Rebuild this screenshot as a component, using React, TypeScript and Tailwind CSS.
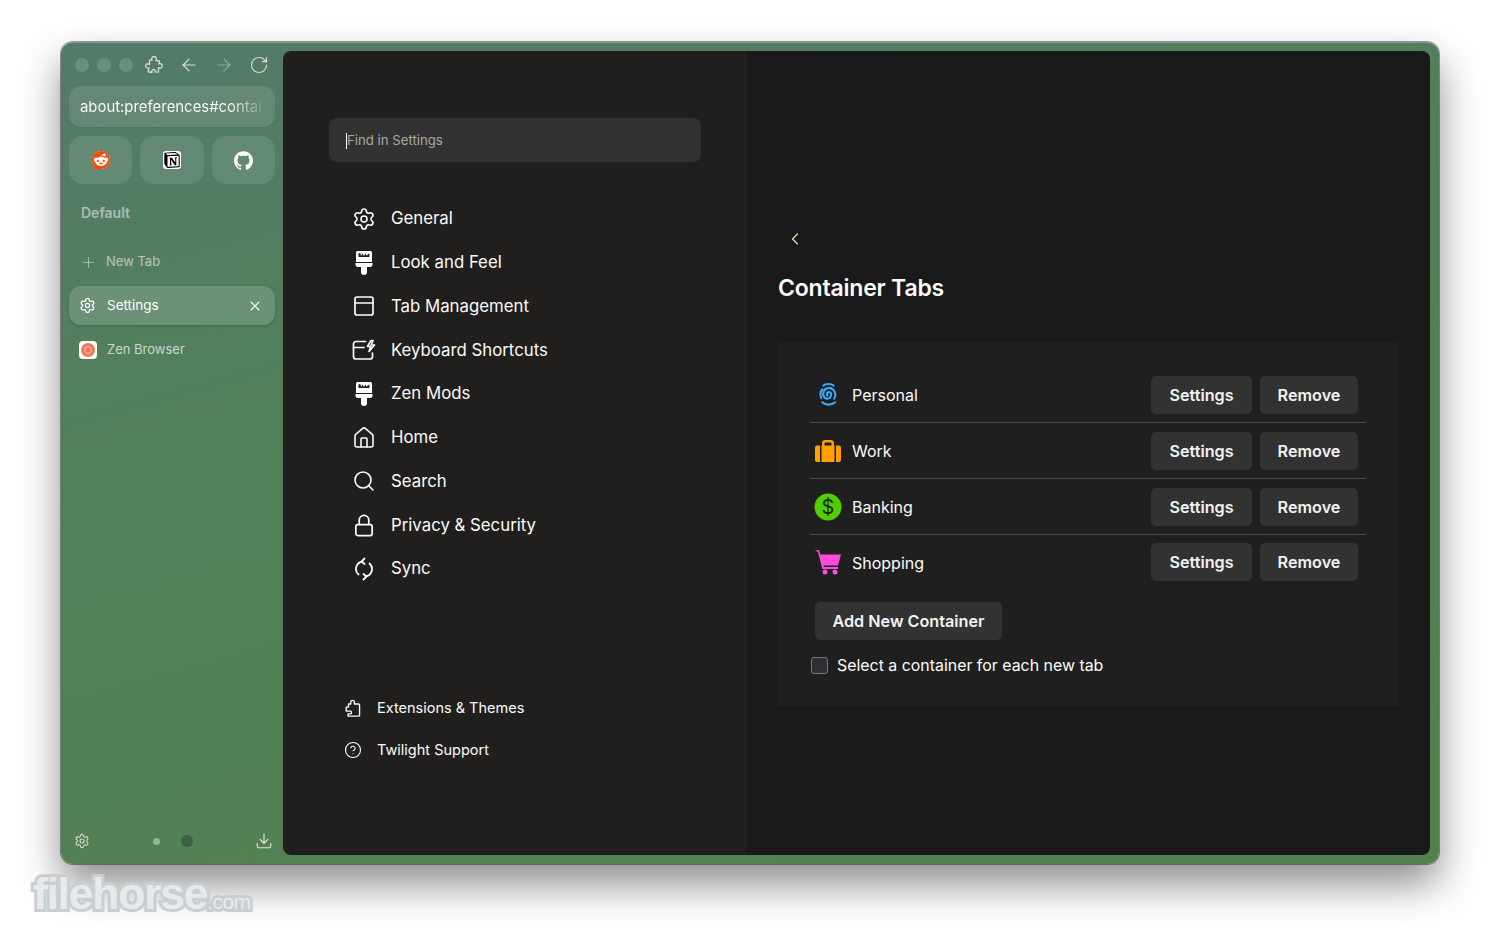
import { ArrowLeft, ArrowRight, ChevronLeft, CircleHelp, Download, House, PanelTop, Plus, RotateCw, Search, Settings, X } from 'lucide-react';
import { SiGithub, SiNotion, SiReddit } from 'react-icons/si';
import type { ReactNode } from 'react';

function PuzzleIcon({ className }: { className?: string }) {
  return (
    <svg className={className} viewBox="0 0 20 20" fill="none" stroke="currentColor" strokeWidth={1.3} strokeLinejoin="round">
      <path d="M8 5C7 2.500 8.500 1.500 10 1.500 12 1.500 13 3.500 12 5.500L15.500 6 15 9C17 8 18.700 9.500 18.200 11.500 17.700 13.200 16 13.500 14.500 12.500L14.500 16.500C14.500 17 14 17.300 13.500 17.200L11 16.800C11.500 15 10 14 9 14.500 8 15 7.500 16 8 17.500L5 17C4.500 17 4.200 16.500 4.300 16L5 13C3 13.500 1.300 12 1.800 10.300 2.300 8.800 4 8.500 5.500 9.500L5.500 5.500C5.500 5 6 4.700 6.500 4.800z" />
    </svg>
  );
}

function BrushIcon({ className }: { className?: string }) {
  return (
    <svg className={className} viewBox="0 0 20 25" fill="currentColor">
      <path d="M3.500 1h13c.8 0 1.500.7 1.500 1.500V12H2V2.500C2 1.700 2.700 1 3.500 1z" />
      <path d="M1.500 13h17v1.800c0 1.200-.9 2.200-2.200 2.200H13v5a3 3 0 0 1-6 0v-5H3.700c-1.300 0-2.200-1-2.200-2.200z" />
      <path d="M4.500 3.200h2l.5 2.800 1.500-2.500 1.300 2.500 1.700-2.500.9 2.300 3-2.600v3.800H4.500z" fill="#201f1e" />
    </svg>
  );
}

function KeyboardIcon({ className }: { className?: string }) {
  return (
    <svg className={className} viewBox="0 0 24 22" fill="none" stroke="currentColor" strokeWidth={1.7} strokeLinejoin="round" strokeLinecap="round">
      <path d="M13.500 2.500H4A2.500 2.500 0 0 0 1.500 5v12.500A2.500 2.500 0 0 0 4 20h14a2.500 2.500 0 0 0 2.500-2.500V14" />
      <path d="M1.500 8.500h10.500" />
      <path d="M19 1.500l-3.500 6h3.300L17 12.500l5.500-6.500h-3.300L21 1.500z" />
    </svg>
  );
}

function LockIcon({ className }: { className?: string }) {
  return (
    <svg className={className} viewBox="0 0 20 24" fill="none" stroke="currentColor" strokeWidth={1.8} strokeLinejoin="round">
      <rect x="1.500" y="11" width="17" height="11.500" rx="2" />
      <path d="M5 11V6.500a5 5 0 0 1 10 0V11" />
    </svg>
  );
}

function SyncIcon({ className }: { className?: string }) {
  return (
    <svg className={className} viewBox="0 0 20 24" fill="none" stroke="currentColor" strokeWidth={1.800} strokeLinecap="round" strokeLinejoin="round">
      <path d="M15.500 6.500A7.500 7.500 0 0 1 11.500 19.500" />
      <path d="M4.500 17.500A7.500 7.500 0 0 1 8.500 4.500" />
      <path d="M10.500 1.500L7.500 4.500 10.500 7M9.500 17l3 2.500-3 3" />
    </svg>
  );
}

function ExtensionIcon({ className }: { className?: string }) {
  return (
    <svg className={className} viewBox="0 0 20 20" fill="none" stroke="currentColor" strokeWidth={1.500} strokeLinejoin="round">
      <path d="M5 9V5.500h2.500V3c0-2 4-2 4 0v2.500H16c.8 0 1.300.5 1.300 1.300V18c0 .6-.5 1-1 1H4.500v-2.500h2.700c1.500 0 1.500-3 0-3H2.500V9z" />
    </svg>
  );
}

function FingerprintIcon() {
  return (
    <svg className="h-[25px] w-[25px]" viewBox="0 0 24 24" fill="none" stroke="#37adf5" strokeWidth={2} strokeLinecap="round">
      <path d="M7 3.500C9.500 1.300 14.500 1.300 17 3.500" />
      <path d="M11 13A2 2 0 1 1 14.500 11.500 3.800 3.800 0 0 1 10 16 5 5 0 0 1 7 10.500 5.500 5.500 0 0 1 16.500 7.500 7.300 7.300 0 0 1 17.500 16" />
      <path d="M5 15.500C4 12.500 4.300 9 6 7" />
      <path d="M6 19.500C9 22.500 15 22.500 18.500 19.500" />
    </svg>
  );
}

function BriefcaseIcon() {
  return (
    <svg className="h-[24px] w-[28px]" viewBox="0 0 28 24" fill="#ff9f00">
      <path d="M8 7V4c0-1.700 1.300-3 3-3h6c1.700 0 3 1.300 3 3v3h-2.500V4.500c0-.5-.4-1-1-1h-5c-.6 0-1 .5-1 1V7z" />
      <rect x="7.500" y="6.500" width="13" height="16.500" />
      <path d="M1 8.500C1 7.400 1.900 6.500 3 6.500h3V23H3c-1.100 0-2-.9-2-2z" />
      <path d="M27 8.500c0-1.100-.9-2-2-2h-3V23h3c1.100 0 2-.9 2-2z" />
    </svg>
  );
}

function DollarIcon() {
  return (
    <svg className="h-[28px] w-[28px]" viewBox="0 0 28 28">
      <circle cx="14" cy="14" r="13.500" fill="#51cd00" />
      <text x="14" y="21" textAnchor="middle" fontSize="20" fill="#12240a" fontFamily="Inter, sans-serif">$</text>
    </svg>
  );
}

function CartIcon() {
  return (
    <svg className="h-[26px] w-[28px]" viewBox="0 0 28 26" fill="#ff4bda">
      <path d="M1 1.500l4-.5 1.300 4.500H27l-3 11H9.500l.4 1.500H24v2H8.300L4 3z" />
      <circle cx="11" cy="23" r="2.500" />
      <circle cx="21" cy="23" r="2.500" />
    </svg>
  );
}

const navItems: { label: string; icon: ReactNode }[] = [
  { label: 'General', icon: <Settings className="h-[24px] w-[24px]" strokeWidth={1.600} /> },
  { label: 'Look and Feel', icon: <BrushIcon className="h-[25px] w-[20px]" /> },
  { label: 'Tab Management', icon: <PanelTop className="h-[24px] w-[24px]" strokeWidth={1.700} /> },
  { label: 'Keyboard Shortcuts', icon: <KeyboardIcon className="h-[22px] w-[24px]" /> },
  { label: 'Zen Mods', icon: <BrushIcon className="h-[25px] w-[20px]" /> },
  { label: 'Home', icon: <House className="h-[24px] w-[24px]" strokeWidth={1.600} /> },
  { label: 'Search', icon: <Search className="h-[24px] w-[24px]" strokeWidth={1.600} /> },
  { label: 'Privacy & Security', icon: <LockIcon className="h-[23px] w-[20px]" /> },
  { label: 'Sync', icon: <SyncIcon className="h-[24px] w-[20px]" /> },
];

const containers: { label: string; icon: ReactNode; row: string }[] = [
  { label: 'Personal', icon: <FingerprintIcon />, row: 'h-[56px] border-b border-[#4a4a4a]' },
  { label: 'Work', icon: <BriefcaseIcon />, row: 'h-[56px] border-b border-[#4a4a4a]' },
  { label: 'Banking', icon: <DollarIcon />, row: 'h-[56px] border-b border-[#4a4a4a]' },
  { label: 'Shopping', icon: <CartIcon />, row: 'h-[54px]' },
];

function Btn({ children, className }: { children: ReactNode; className: string }) {
  return (
    <button className={`flex h-[38px] items-center justify-center rounded-[5px] bg-[#323232] pt-[1px] text-[16.200px] font-semibold text-[#f2f2f2] ${className}`}>
      {children}
    </button>
  );
}

function Sidebar() {
  return (
    <aside className="flex w-[222px] shrink-0 flex-col pb-[4px] pl-[8px] pr-[8px] pt-[7px] text-white">
      {/* window controls */}
      <div className="flex h-[30px] items-center pl-[6px]">
        <span className="h-[14px] w-[14px] rounded-full bg-white/15" />
        <span className="ml-[8px] h-[14px] w-[14px] rounded-full bg-white/15" />
        <span className="ml-[8px] h-[14px] w-[14px] rounded-full bg-white/15" />
        <PuzzleIcon className="ml-[11px] h-[20px] w-[20px] text-white/75" />
        <ArrowLeft className="ml-[15px] h-[20px] w-[20px] text-white/75" strokeWidth={1.400} />
        <ArrowRight className="ml-[15px] h-[20px] w-[20px] text-white/35" strokeWidth={1.400} />
        <RotateCw className="ml-[15px] h-[20px] w-[20px] text-white/75" strokeWidth={1.400} />
      </div>
      <div className="mt-[6px] flex h-[41px] items-center rounded-[12px] bg-white/10 pl-[11px] pt-[1px] shadow-[0_1px_2px_rgba(0,0,0,0.05)]">
        <span className="whitespace-nowrap bg-[linear-gradient(90deg,#fff_82%,rgba(255,255,255,0.15))] bg-clip-text text-[14.900px] text-transparent">about:preferences#contai</span>
      </div>
      <div className="mt-[9px] grid grid-cols-3 gap-[8px]">
        <div className="flex h-[48px] items-center justify-center rounded-[14px] bg-white/10">
          <span className="flex h-[18px] w-[18px] items-center justify-center rounded-full bg-white">
            <SiReddit className="h-[18px] w-[18px] text-[#ff4500]" />
          </span>
        </div>
        <div className="flex h-[48px] items-center justify-center rounded-[14px] bg-white/10">
          <span className="flex h-[18px] w-[18px] items-center justify-center rounded-[3px] bg-white">
            <SiNotion className="h-[16px] w-[16px] text-black" />
          </span>
        </div>
        <div className="flex h-[48px] items-center justify-center rounded-[14px] bg-white/10">
          <SiGithub className="h-[19px] w-[19px] text-white" />
        </div>
      </div>
      <div className="mt-[18px] pl-[12px] text-[14px] font-semibold text-white/50">Default</div>
      <div className="mt-[19px] flex h-[40px] items-center pl-[11px] text-[13px] text-white/55">
        <Plus className="h-[17px] w-[17px]" strokeWidth={1.200} />
        <span className="ml-[9px]">New Tab</span>
      </div>
      <div className="mt-[4px] flex h-[39px] items-center rounded-[12px] bg-white/15 pl-[10px] pr-[12px] text-[13.500px] text-white shadow-[0_1px_3px_rgba(0,0,0,0.2)]">
        <Settings className="h-[17px] w-[17px]" strokeWidth={1.800} />
        <span className="ml-[11px] flex-1">Settings</span>
        <X className="h-[16px] w-[16px]" strokeWidth={1.600} />
      </div>
      <div className="mt-[5px] flex h-[40px] items-center pl-[10px] text-[13px] text-white/70">
        <span className="flex h-[18px] w-[18px] items-center justify-center rounded-[4px] bg-white">
          <span className="flex h-[14px] w-[14px] items-center justify-center rounded-full bg-[#f0785a]">
            <span className="h-[8px] w-[8px] rounded-full border border-[#f9c4b4]" />
          </span>
        </span>
        <span className="ml-[10px]">Zen Browser</span>
      </div>
      <div className="mt-auto flex h-[20px] items-center pl-[5px] pr-[2px]">
        <Settings className="h-[16px] w-[16px] text-white/75" strokeWidth={1.600} />
        <div className="ml-[63px] h-[7px] w-[7px] rounded-full bg-white/40" />
        <div className="ml-[21px] h-[12px] w-[12px] rounded-full bg-[#3f5f45]" />
        <Download className="ml-auto h-[18px] w-[18px] text-white/80" strokeWidth={1.500} />
      </div>
    </aside>
  );
}

function SettingsNav() {
  return (
    <nav className="flex w-[464px] shrink-0 flex-col bg-[#201f1e] pb-[89px] pl-[46px] pr-[46px] pt-[67px]">
      <div className="flex h-[44px] items-center rounded-[8px] bg-[#333232] pl-[17px] pt-[1px] text-[13.200px] text-[#a8a8a8]">
        <span className="h-[16px] w-px bg-white" />
        Find in Settings
      </div>
      <ul className="mt-[35px] flex flex-col">
        {navItems.map((item) => (
          <li key={item.label} className="flex h-[43.750px] items-center text-[16.800px] text-[#fbfbfb]">
            <span className="ml-[22px] flex w-[26px] shrink-0 justify-center">{item.icon}</span>
            <span className="ml-[14px]">{item.label}</span>
          </li>
        ))}
      </ul>
      <ul className="mt-auto flex flex-col gap-[10px] text-[14.500px] text-[#fbfbfb]">
        <li className="flex h-[32px] items-center pl-[15px]">
          <ExtensionIcon className="h-[18px] w-[18px]" />
          <span className="ml-[15px]">Extensions &amp; Themes</span>
        </li>
        <li className="flex h-[32px] items-center pl-[15px]">
          <CircleHelp className="h-[18px] w-[18px]" strokeWidth={1.500} />
          <span className="ml-[15px]">Twilight Support</span>
        </li>
      </ul>
    </nav>
  );
}

function ContainerPanel() {
  return (
    <section className="flex min-w-0 flex-1 flex-col bg-[#191919] pl-[31px] pr-[31px] pt-[178px] text-[#fbfbfb]">
      <ChevronLeft className="ml-[7px] h-[20px] w-[20px] text-[#f1d9b5]" strokeWidth={1.500} />
      <h1 className="mt-[24px] text-[23px] font-semibold leading-[30px] tracking-[-0.2px]">Container Tabs</h1>
      <div className="mt-[40px] flex h-[363px] flex-col bg-[#1f1f1f] pl-[32px] pr-[33px] pt-[24px]">
        {containers.map((c) => (
          <div key={c.label} className={`flex items-center text-[16px] ${c.row}`}>
            <span className="flex w-[36px] justify-center">{c.icon}</span>
            <span className="ml-[6px] flex-1 pt-[1px]">{c.label}</span>
            <Btn className="w-[101px]">Settings</Btn>
            <Btn className="ml-[8px] mr-[8px] w-[98px]">Remove</Btn>
          </div>
        ))}
        <Btn className="ml-[5px] mt-[13px] w-[187px]">Add New Container</Btn>
        <label className="ml-[1px] mt-[14px] flex items-center text-[15.900px]">
          <span className="h-[17px] w-[17px] rounded-[3px] border border-[#777] bg-[#2f2f33]" />
          <span className="ml-[9px]">Select a container for each new tab</span>
        </label>
      </div>
    </section>
  );
}

export default function App() {
  return (
    <div className="relative h-[945px] w-[1500px] overflow-hidden bg-white pl-[61px] pr-[61px] pt-[42px] font-['Inter',sans-serif]">
      <div className="flex h-[822px] overflow-hidden rounded-[12px] border-t border-t-[#7f9a88] bg-[linear-gradient(165deg,#547a6a_0%,#52805a_35%,#52814f_100%)] pb-[9px] pr-[9px] shadow-[0_20px_40px_rgba(0,0,0,0.45),0_0_0_1px_rgba(60,60,60,0.5)]">
        <Sidebar />
        <main className="mt-[8px] flex min-w-0 flex-1 overflow-hidden rounded-[8px]">
          <SettingsNav />
          <ContainerPanel />
        </main>
      </div>
      {/* filehorse watermark */}
      <div className="absolute left-[33px] top-[866px] flex items-baseline whitespace-nowrap font-['Liberation_Sans',sans-serif] font-bold text-[#e8e9ea] [-webkit-text-stroke:6px_#c8ced2] [paint-order:stroke_fill]">
        <span className="text-[45px] leading-[56px] tracking-[-1.500px]">filehorse</span>
        <span className="text-[21px] font-normal tracking-[-0.500px]">.com</span>
      </div>
    </div>
  );
}
